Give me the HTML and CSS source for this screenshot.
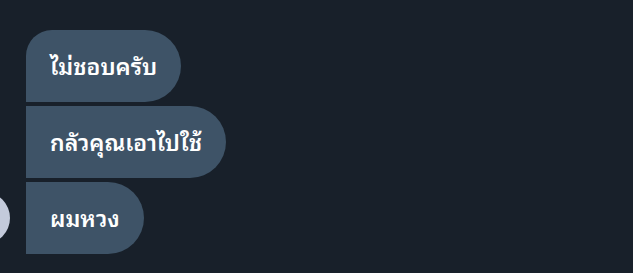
FILE: index.html
```html
<!DOCTYPE html>
<html lang="th">
<head>
  <meta charset="UTF-8" />
  <title>แชท</title>
  <meta name="viewport" content="width=device-width, initial-scale=1" />
  <link rel="stylesheet" href="styles.css">
</head>
<body>

  <div class="chat">
    <div class="grupo">
      <div class="avatar"></div>
      <div class="mensajes">
        <div class="burbuja primera">ไม่ชอบครับ</div>
        <div class="burbuja">กลัวคุณเอาไปใช้</div>
        <div class="burbuja">ผมหวง</div>
      </div>
    </div>
  </div>

</body>
</html>
```

FILE: styles.css
```css
body {
  margin: 0;
  background: #18202a;
  color: #fff;
  font-family: "Noto Sans Thai Looped", "Loma", "Garuda", "Tlwg Typo", "Noto Sans", sans-serif;
  overflow: hidden;
}
.chat {
  padding-top: 30px;
}
.grupo {
  display: flex;
  align-items: flex-end;
  gap: 16px;
  margin-left: -42px;
}
.avatar {
  width: 52px;
  height: 52px;
  border-radius: 50%;
  background: #c3cadb;
  margin-bottom: 10px;
  flex-shrink: 0;
}
.mensajes {
  display: flex;
  flex-direction: column;
  align-items: flex-start;
  gap: 4px;
}
.burbuja {
  background: #3e5367;
  padding: 19px 24px 21px;
  font-size: 23px;
  line-height: 32px;
  font-weight: 600;
  border-radius: 0 36px 36px 0;
  white-space: nowrap;
}
.burbuja.primera {
  border-top-left-radius: 26px;
}
```
